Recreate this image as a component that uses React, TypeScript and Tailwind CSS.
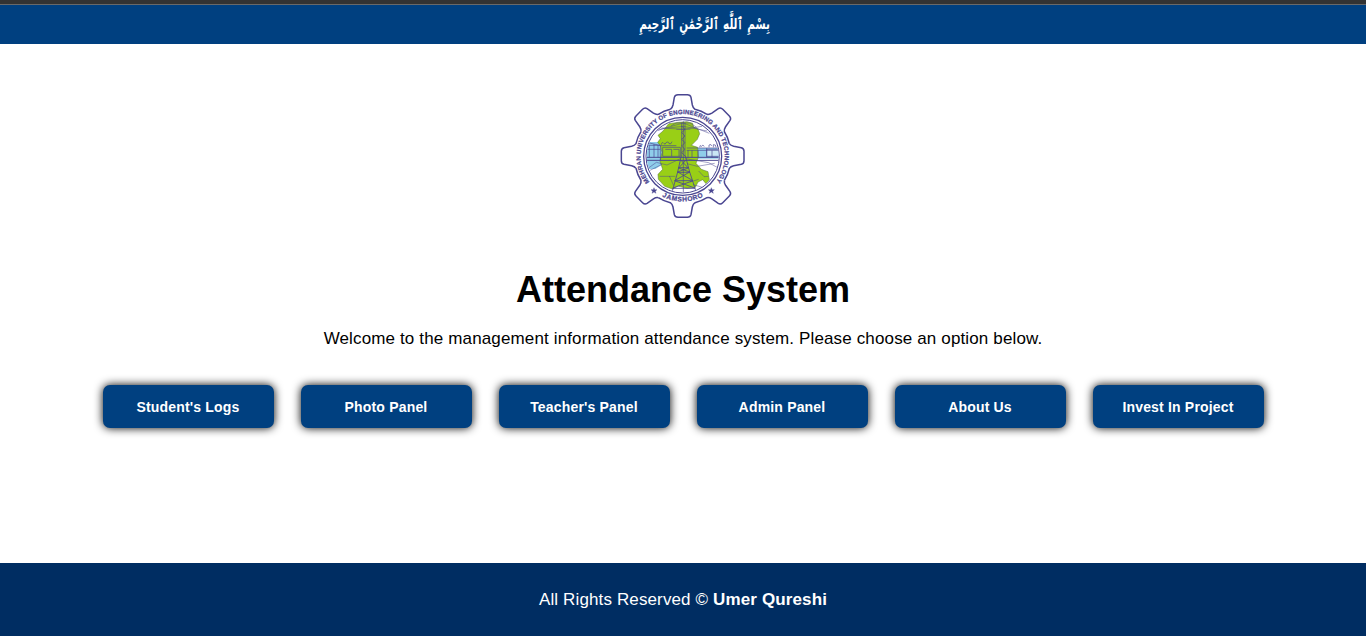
const INK = "#4a4691";

const tooth =
  "M-37 -140 Q-31 -144 -29 -153 L-25 -176 Q-23 -184 -14 -184 H14 Q23 -184 25 -176 L29 -153 Q31 -144 37 -140 Q56 -136 73 -125";

const angles = [0, 45, 90, 135, 180, 225, 270, 315];

function Star({ x, y }: { x: number; y: number }) {
  return (
    <path
      transform={`translate(${x} ${y})`}
      d="M0 -9 L2.4 -3 L9 -3 L4 1.5 L6 8 L0 4 L-6 8 L-4 1.5 L-9 -3 L-2.4 -3Z"
      fill={INK}
    />
  );
}

function Crest() {
  return (
    <svg viewBox="0 0 426 426" className="block size-[142px]" fill="none" stroke={INK}>
      <defs>
        <path id="upper" d="M112.7 287.6 A126 126 0 1 1 311.3 287.6" />
        <path id="lower" d="M120 311 A137 137 0 0 0 304 311" />
        <clipPath id="disc">
          <circle cx="212" cy="211" r="108" />
        </clipPath>
      </defs>
      <g transform="translate(212 210)" strokeWidth="4.5">
        {angles.map((a) => (
          <path key={a} d={tooth} transform={`rotate(${a})`} />
        ))}
      </g>
      <circle cx="212" cy="211" r="117" strokeWidth="4" />
      <circle cx="212" cy="211" r="110" strokeWidth="3" />
      <g clipPath="url(#disc)" strokeWidth="2">
        <path d="M104 168 H150 V236 L130 249 H104Z M256 186 H322 V218 H256Z" fill="#8fcdea" stroke="none" />
        <path d="M284 190 H322 V211 H284Z" fill="#c9e6f4" />
        <path
          d="M153 135 L170 113 L200 109 L225 107 L242 112 L245 124 L258 129 L263 143 L256 160 L238 178 L257 184 L259 214 L252 232 L268 250 L288 257 L292 281 L282 293 L272 281 L258 288 L250 304 L225 307 L198 300 L181 309 L158 301 L139 280 L138 265 L152 250 L144 226 L150 199 L145 179 L137 169 L145 158 L138 148Z"
          fill="#99cf16"
          stroke="#55703f"
          strokeWidth="1.5"
        />
        <path d="M100 214 H324 M100 223 H324" strokeWidth="3" />
        <path d="M104 169 L147 179 H193 M104 178 H145 M152 184 H205 V211 H152Z M160 190 H179 V211 M184 190 H201 V211 M224 186 H320 M224 193 H320 M228 193 V214 M240 193 V214 M258 193 V214 M284 186 V214 M300 193 V214 M112 178 V214 M126 174 V214 M138 178 V214 M145 180 V222 M104 190 H145" />
        <path d="M118 140 L156 127 L214 121 L286 135 M128 135 L214 111 L292 142 M136 125 L214 130 L270 121 M177 120 L192 111 H234 L254 124 M193 130 H235" strokeWidth="1.5" />
        <path d="M209 110 V212 M214 106 V318 M219 110 V212 M209 120 L219 130 L209 140 L219 150 L209 160 L219 170 L209 180 L219 190 L209 200 L219 210" />
        <path d="M208 209 L197 258 L180 319 M220 209 L233 258 L253 319 M206 222 L229 246 L197 258 L243 284 L183 306 M222 222 L200 246 L233 258 L188 284 L248 306 M200 245 H229 M196 259 H234 M188 284 H242 M181 307 H249" strokeWidth="2.5" />
        <path d="M111 245 L133 229 L165 237 L205 218 M108 256 L150 235 M220 218 L290 230 L319 246 M225 233 L256 241 L308 232 M143 271 H190 M172 270 L185 299 M234 288 L260 280 M260 255 L276 272 L290 271 M243 296 L272 304" strokeWidth="1.5" />
        <path d="M148 176 q2 -11 8 -3 q4 4 6 -3 q8 -5 9 3 q7 3 9 -6 M263 184 q0 -9 6 -3 q3 -7 8 0 M291 184 v-7 q6 -5 8 3 M304 184 v-8 q8 -2 8 8" />
      </g>
      <g fill={INK} strokeWidth="0.7" className="font-['Liberation_Sans',Arial,sans-serif] font-bold">
        <text fontSize="18.5">
          <textPath href="#upper" textLength="560" lengthAdjust="spacing">
            MEHRAN UNIVERSITY OF ENGINEERING AND TECHNOLOGY
          </textPath>
        </text>
        <text fontSize="20">
          <textPath href="#lower" startOffset="50%" textAnchor="middle" textLength="128" lengthAdjust="spacing">
            JAMSHORO
          </textPath>
        </text>
      </g>
      <Star x={126} y={314} />
      <Star x={298} y={314} />
    </svg>
  );
}

const options = ["Student's Logs", "Photo Panel", "Teacher's Panel", "Admin Panel", "About Us", "Invest In Project"];

export default function App() {
  return (
    <div className="flex h-[636px] w-full flex-col overflow-hidden bg-white font-['Liberation_Sans',Arial,sans-serif] text-black">
      <div className="h-[5px] shrink-0 border-b border-[#696969] bg-[#333333]" />
      <header className="flex h-[39px] shrink-0 items-center justify-center bg-[#004080] pl-[43px] text-white">
        <p dir="rtl" lang="ar" className="scale-x-[0.69] font-['DejaVu_Sans',sans-serif] text-[15px] leading-none font-bold whitespace-nowrap">
          بِسْمِ ٱللَّٰهِ ٱلرَّحْمَٰنِ ٱلرَّحِيمِ
        </p>
      </header>
      <main className="flex grow flex-col items-center pt-[42px]">
        <Crest />
        <h1 className="mt-10 text-4xl leading-[44px] font-bold">Attendance System</h1>
        <p className="mt-[15px] text-[17px] leading-6 tracking-[0.14px]">
          Welcome to the management information attendance system. Please choose an option below.
        </p>
        <nav className="mt-[34px] flex gap-[27px]">
          {options.map((label) => (
            <button
              key={label}
              className="h-[43px] w-[171px] rounded-[7px] bg-[#004080] text-sm font-bold tracking-[0.18px] text-white shadow-[0_0_10px_#000000]"
            >
              {label}
            </button>
          ))}
        </nav>
      </main>
      <footer className="flex h-[73px] shrink-0 items-center justify-center bg-[#002d62] text-[17px] tracking-[0.13px] text-white">
        <p>
          All Rights Reserved © <strong>Umer Qureshi</strong>
        </p>
      </footer>
    </div>
  );
}
